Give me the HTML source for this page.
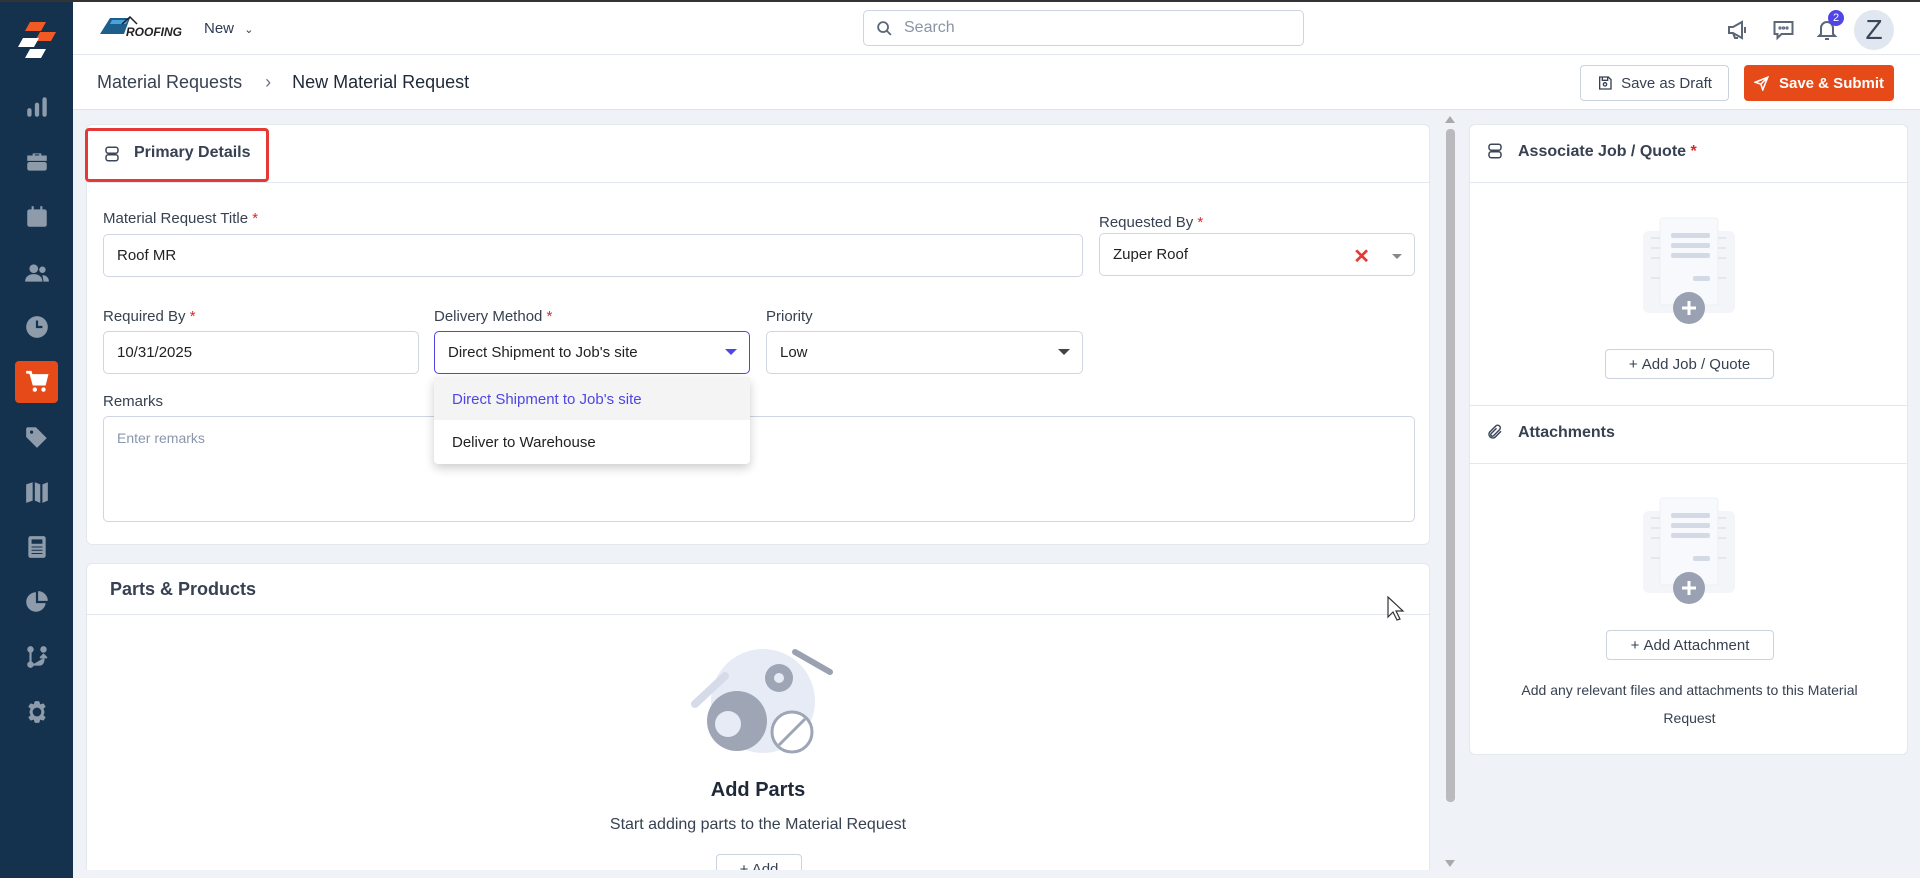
<!DOCTYPE html>
<html style="overflow:hidden;height:878px"><head><meta charset="utf-8"><style>
*{box-sizing:border-box;margin:0;padding:0}
body{width:1920px;height:878px;overflow:hidden;font-family:"Liberation Sans",sans-serif;background:#eff2f7;color:#1f2937;position:relative}
.abs{position:absolute}
.side{left:0;top:0;width:73px;height:878px;background:#14324d;border-top:2px solid #333;z-index:5}
.top{left:73px;top:0;right:0;height:55px;background:#fff;border-bottom:1px solid #e3e7ee;border-top:2px solid #333}
.crumb{left:73px;top:55px;right:0;height:55px;background:#fff;border-bottom:1px solid #dfe4ec}
.card{background:#fff;border:1px solid #e3e7ee;border-radius:6px}
.lbl{font-size:15px;color:#374151}
.req{color:#e02424}
.inp{border:1px solid #cfd6e2;border-radius:5px;background:#fff;font-size:15px;color:#222;padding-left:13px;display:flex;align-items:center}
.btn{border:1px solid #cbd3df;border-radius:4px;background:#fff;font-size:15px;color:#374151;display:flex;align-items:center;justify-content:center;gap:8px}
.ic{position:absolute;left:24px;width:26px;height:26px;fill:#8d9bab}
</style></head><body>
<div class="abs side">
 <svg class="abs" style="left:16px;top:20px" width="42" height="40" viewBox="0 0 42 40"><polygon points="14,0 30,0 25,9 9,9" fill="#f15a22"/><polygon points="24,10 40,10 35,19 19,19" fill="#f15a22"/><polygon points="7,16 23,16 18,25 2,25" fill="#fff"/><polygon points="14,27 30,27 25,36 9,36" fill="#fff"/></svg>
 <svg class="ic" style="top:92px" viewBox="0 0 24 24"><rect x="3" y="13" width="4" height="8" rx="2"/><rect x="10" y="8" width="4" height="13" rx="2"/><rect x="17" y="3" width="4" height="18" rx="2"/></svg>
 <svg class="ic" style="top:147px" viewBox="0 0 24 24"><path d="M8 6V4h8v2h5v5H3V6zM10 5v1h4V5z"/><rect x="3" y="12" width="18" height="8" rx="2"/></svg>
 <svg class="ic" style="top:202px" viewBox="0 0 24 24"><rect x="3" y="5" width="18" height="16" rx="2"/><rect x="7" y="2" width="2" height="5"/><rect x="15" y="2" width="2" height="5"/></svg>
 <svg class="ic" style="top:258px" viewBox="0 0 24 24"><circle cx="9" cy="8" r="4"/><path d="M1 20c0-5 4-7 8-7s8 2 8 7z"/><circle cx="17" cy="9" r="3"/><path d="M18 20h5c0-4-3-6-6-6z"/></svg>
 <svg class="ic" style="top:312px" viewBox="0 0 24 24"><circle cx="12" cy="12" r="10"/><path d="M12 6v6h5" stroke="#14324d" stroke-width="2" fill="none"/></svg>
 <div class="abs" style="left:15px;top:359px;width:43px;height:42px;background:#e64a19;border-radius:4px"></div>
 <svg class="ic" style="top:367px;fill:#fff" viewBox="0 0 24 24"><path d="M2 3h4l3 11h10l2-8H7" stroke="#fff" stroke-width="2.5" fill="#fff"/><circle cx="10" cy="19" r="2"/><circle cx="18" cy="19" r="2"/></svg>
 <svg class="ic" style="top:422px" viewBox="0 0 24 24"><path d="M2 4v8l10 10 9-9L11 3H3zM7 6a1.5 1.5 0 1 1 0 3a1.5 1.5 0 0 1 0-3"/></svg>
 <svg class="ic" style="top:477px" viewBox="0 0 24 24"><path d="M2 5l6-2v17l-6 2zM10 3l5 2v17l-5-2zM17 5l5-2v17l-5 2z"/></svg>
 <svg class="ic" style="top:532px" viewBox="0 0 24 24"><rect x="4" y="2" width="16" height="20" rx="2"/><rect x="7" y="5" width="10" height="4" fill="#14324d"/><path d="M7 12h10M7 15h10M7 18h10" stroke="#14324d"/></svg>
 <svg class="ic" style="top:587px" viewBox="0 0 24 24"><path d="M11 3a9 9 0 1 0 9 10h-9z"/><path d="M13 2v9h9a9 9 0 0 0-9-9"/></svg>
 <svg class="ic" style="top:642px" viewBox="0 0 24 24" fill="none" stroke="#8d9bab" stroke-width="2"><circle cx="6" cy="5" r="2"/><circle cx="6" cy="19" r="2"/><path d="M6 7v10M8 19h6c3 0 4-2 4-6M15 13l3-3 3 3"/><circle cx="18" cy="5" r="2"/></svg>
 <svg class="ic" style="top:697px" viewBox="0 0 24 24"><path d="M10 2h4l1 3 3-1 2 3-2 2 1 3h-0l-1 3 2 2-2 3-3-1-1 3h-4l-1-3-3 1-2-3 2-2-1-3 1-3-2-2 2-3 3 1zM12 8a4 4 0 1 0 0 8a4 4 0 0 0 0-8"/></svg>
</div>
<div class="abs top">
 <svg class="abs" style="left:27px;top:14px" width="90" height="24" viewBox="0 0 90 24"><polygon points="10,2 30,2 24,18 0,18" fill="#1d5f8a"/><polygon points="12,4 28,4 26,8 10,8" fill="#4aa3d8"/><path d="M22 8l8-7 7 7" stroke="#222" fill="none" stroke-width="1.5"/><text x="26" y="20" font-size="12" font-style="italic" font-weight="bold" fill="#222" font-family="Liberation Sans">ROOFING</text></svg>
 <div class="abs" style="left:131px;top:18px;font-size:15px;color:#2d3b55">New <span style="font-size:11px;margin-left:6px">&#8964;</span></div>
 <div class="abs" style="left:790px;top:8px;width:441px;height:36px;border:1px solid #cdd4df;border-radius:5px;font-size:16px;color:#8a94a6;padding-left:40px;line-height:34px">Search
  <svg class="abs" style="left:12px;top:9px" width="17" height="17" viewBox="0 0 24 24" fill="none" stroke="#5b6677" stroke-width="2.5"><circle cx="10" cy="10" r="7"/><path d="M15 15l6 6"/></svg></div>
 <svg class="abs" style="left:1653px;top:16px" width="24" height="24" viewBox="0 0 24 24" fill="none" stroke="#5b6677" stroke-width="2"><path d="M3 9h4l9-5v16l-9-5H3zM7 15l2 5h3"/><path d="M19 9v6"/></svg>
 <svg class="abs" style="left:1698px;top:16px" width="25" height="24" viewBox="0 0 24 24" fill="none" stroke="#5b6677" stroke-width="2"><path d="M3 4h18v12H10l-4 4v-4H3z"/><circle cx="8.5" cy="10" r=".6"/><circle cx="12" cy="10" r=".6"/><circle cx="15.5" cy="10" r=".6"/></svg>
 <svg class="abs" style="left:1742px;top:16px" width="24" height="24" viewBox="0 0 24 24" fill="none" stroke="#5b6677" stroke-width="2"><path d="M6 16V10a6 6 0 0 1 12 0v6l2 2H4zM10 21h4"/></svg>
 <div class="abs" style="left:1755px;top:8px;width:16px;height:16px;border-radius:50%;background:#4f46e5;color:#fff;font-size:11px;text-align:center;line-height:16px">2</div>
 <div class="abs" style="left:1781px;top:8px;width:40px;height:40px;border-radius:50%;background:#e1e7f0;color:#3b4658;font-size:28px;text-align:center;line-height:40px">Z</div>
</div>
<div class="abs crumb">
 <div class="abs" style="left:24px;top:17px;font-size:18px;color:#374151">Material Requests <span style="margin:0 16px 0 18px;color:#6b7280">&#8250;</span> <span style="color:#1f2937">New Material Request</span></div>
 <div class="abs btn" style="left:1507px;top:10px;width:149px;height:36px"><svg width="16" height="16" viewBox="0 0 24 24" fill="none" stroke="#374151" stroke-width="2"><path d="M4 3h13l4 4v14H4zM8 3v5h8V3"/><circle cx="12" cy="14" r="2.5"/></svg>Save as Draft</div>
 <div class="abs" style="left:1671px;top:10px;width:150px;height:36px;background:#e64a19;border-radius:4px;color:#fff;font-size:15px;font-weight:bold;display:flex;align-items:center;justify-content:center;gap:10px"><svg width="15" height="15" viewBox="0 0 24 24" fill="none" stroke="#fff" stroke-width="2.5"><path d="M22 2L2 10l9 3 3 9zM11 13l11-11"/></svg>Save &amp; Submit</div>
</div>
<!-- card 1 -->
<div class="abs card" style="left:86px;top:124px;width:1344px;height:421px">
 <div class="abs" style="left:0;top:57px;width:100%;border-top:1px solid #e3e7ee"></div>
 <div class="abs" style="left:-2px;top:3px;width:184px;height:54px;border:3px solid #e53935;border-radius:4px"></div>
 <svg class="abs" style="left:16px;top:20px" width="18" height="18" viewBox="0 0 24 24" fill="none" stroke="#3b4658" stroke-width="2"><rect x="4" y="3" width="16" height="8" rx="3"/><rect x="4" y="13" width="16" height="8" rx="3"/></svg>
 <div class="abs" style="left:47px;top:19px;font-size:16px;font-weight:bold;color:#374151">Primary Details</div>
 <div class="abs lbl" style="left:16px;top:85px">Material Request Title <span class="req">*</span></div>
 <div class="abs inp" style="left:16px;top:109px;width:980px;height:43px">Roof MR</div>
 <div class="abs lbl" style="left:1012px;top:89px">Requested By <span class="req">*</span></div>
 <div class="abs inp" style="left:1012px;top:108px;width:316px;height:43px">Zuper Roof<span class="abs" style="right:44px;top:10px;color:#e53935;font-size:20px;font-weight:bold">&#10005;</span><span class="abs" style="right:12px;top:20px;border:5px solid transparent;border-top-color:#888"></span></div>
 <div class="abs lbl" style="left:16px;top:183px">Required By <span class="req">*</span></div>
 <div class="abs inp" style="left:16px;top:206px;width:316px;height:43px">10/31/2025</div>
 <div class="abs lbl" style="left:347px;top:183px">Delivery Method <span class="req">*</span></div>
 <div class="abs inp" style="left:347px;top:206px;width:316px;height:43px;border-color:#4f46e5">Direct Shipment to Job's site<span class="abs" style="right:12px;top:17px;border:6px solid transparent;border-top-color:#4f46e5"></span></div>
 <div class="abs lbl" style="left:679px;top:183px">Priority</div>
 <div class="abs inp" style="left:679px;top:206px;width:317px;height:43px">Low<span class="abs" style="right:12px;top:17px;border:6px solid transparent;border-top-color:#444"></span></div>
 <div class="abs lbl" style="left:16px;top:268px">Remarks</div>
 <div class="abs inp" style="left:16px;top:291px;width:1312px;height:106px;align-items:flex-start;padding-top:13px;color:#8a97aa;font-size:14px">Enter remarks</div>
 <div class="abs" style="left:347px;top:252px;width:316px;height:87px;background:#fff;border-radius:4px;box-shadow:0 4px 10px rgba(0,0,0,.2);font-size:15px">
  <div style="height:43px;background:#f4f4f5;color:#4f46e5;padding:14px 0 0 18px">Direct Shipment to Job's site</div>
  <div style="padding:14px 0 0 18px;color:#222">Deliver to Warehouse</div>
 </div>
</div>
<!-- card 2 -->
<div class="abs card" style="left:86px;top:563px;width:1344px;height:307px;overflow:hidden;border-bottom:0;border-radius:6px 6px 0 0">
 <div class="abs" style="left:0;top:50px;width:100%;border-top:1px solid #e3e7ee"></div>
 <div class="abs" style="left:23px;top:15px;font-size:18px;font-weight:bold;color:#374151">Parts &amp; Products</div>
 <svg class="abs" style="left:598px;top:80px" width="150" height="115" viewBox="0 0 150 115">
  <circle cx="78" cy="57" r="52" fill="#e7ebf5"/>
  <path d="M10 60l30-28" stroke="#d5dbe8" stroke-width="8" stroke-linecap="round"/>
  <path d="M110 8l35 20" stroke="#9aa1b0" stroke-width="6" stroke-linecap="round"/>
  <circle cx="52" cy="77" r="30" fill="#9ea5b5"/><circle cx="43" cy="80" r="13" fill="#e7ebf5"/>
  <circle cx="94" cy="34" r="14" fill="#9ea5b5"/><circle cx="94" cy="34" r="5" fill="#e7ebf5"/>
  <circle cx="107" cy="88" r="20" fill="#fff" stroke="#9ea5b5" stroke-width="3"/><path d="M94 101l26-26" stroke="#9ea5b5" stroke-width="3"/>
 </svg>
 <div class="abs" style="left:0;width:100%;text-align:center;top:215px;font-size:20px;font-weight:bold;color:#1f2937">Add Parts</div>
 <div class="abs" style="left:0;width:100%;text-align:center;top:252px;font-size:16px;color:#374151">Start adding parts to the Material Request</div>
 <div class="abs btn" style="left:629px;top:290px;width:86px;height:40px;align-items:flex-start;padding-top:6px">+ Add</div>
</div>
<div class="abs" style="left:73px;top:870px;width:1847px;height:8px;background:#eff2f7"></div>
<!-- scrollbar -->
<div class="abs" style="left:1445px;top:116px;width:0;height:0;border:5px solid transparent;border-bottom:7px solid #aaa;border-top:0"></div>
<div class="abs" style="left:1446px;top:129px;width:9px;height:673px;background:#b9b9be;border-radius:4px"></div>
<div class="abs" style="left:1445px;top:860px;width:0;height:0;border:5px solid transparent;border-top:7px solid #aaa;border-bottom:0"></div>
<!-- right card -->
<div class="abs card" style="left:1469px;top:124px;width:439px;height:631px">
 <div class="abs" style="left:0;top:57px;width:100%;border-top:1px solid #e3e7ee"></div>
 <svg class="abs" style="left:16px;top:17px" width="18" height="18" viewBox="0 0 24 24" fill="none" stroke="#3b4658" stroke-width="2"><rect x="4" y="3" width="16" height="8" rx="3"/><rect x="4" y="13" width="16" height="8" rx="3"/></svg>
 <div class="abs" style="left:48px;top:18px;font-size:16px;font-weight:bold;color:#374151">Associate Job / Quote <span class="req">*</span></div>
 <svg class="abs" style="left:170px;top:88px" width="100" height="115" viewBox="0 0 100 115"><rect x="3" y="18" width="92" height="82" rx="6" fill="#f3f5f9"/><rect x="20" y="5" width="58" height="87" rx="3" fill="#f8f9fc" stroke="#eef0f5"/><rect x="31" y="20" width="39" height="5" rx="2" fill="#d3dae6"/><rect x="31" y="30" width="39" height="5" rx="2" fill="#d3dae6"/><rect x="31" y="40" width="39" height="5" rx="2" fill="#d3dae6"/><rect x="53" y="63" width="17" height="5" rx="2" fill="#d3dae6"/><path d="M11 25h9M11 35h9M11 45h9M11 65h9M78 25h8M78 35h8M78 45h8M78 65h8" stroke="#d3dae6"/><circle cx="49" cy="95" r="16" fill="#9aa1b2"/><path d="M49 88v14M42 95h14" stroke="#fff" stroke-width="3"/></svg>
 <div class="abs btn" style="left:135px;top:224px;width:169px;height:30px">+&nbsp;Add Job / Quote</div>
 <div class="abs" style="left:0;top:280px;width:100%;border-top:1px solid #e3e7ee"></div>
 <svg class="abs" style="left:16px;top:298px" width="18" height="18" viewBox="0 0 24 24" fill="none" stroke="#3b4658" stroke-width="2"><path d="M20 11l-8 8a5 5 0 0 1-7-7l8-8a3.5 3.5 0 0 1 5 5l-8 8a2 2 0 0 1-3-3l7-7"/></svg>
 <div class="abs" style="left:48px;top:299px;font-size:16px;font-weight:bold;color:#374151">Attachments</div>
 <div class="abs" style="left:0;top:338px;width:100%;border-top:1px solid #e3e7ee"></div>
 <svg class="abs" style="left:170px;top:368px" width="100" height="115" viewBox="0 0 100 115"><rect x="3" y="18" width="92" height="82" rx="6" fill="#f3f5f9"/><rect x="20" y="5" width="58" height="87" rx="3" fill="#f8f9fc" stroke="#eef0f5"/><rect x="31" y="20" width="39" height="5" rx="2" fill="#d3dae6"/><rect x="31" y="30" width="39" height="5" rx="2" fill="#d3dae6"/><rect x="31" y="40" width="39" height="5" rx="2" fill="#d3dae6"/><rect x="53" y="63" width="17" height="5" rx="2" fill="#d3dae6"/><path d="M11 25h9M11 35h9M11 45h9M11 65h9M78 25h8M78 35h8M78 45h8M78 65h8" stroke="#d3dae6"/><circle cx="49" cy="95" r="16" fill="#9aa1b2"/><path d="M49 88v14M42 95h14" stroke="#fff" stroke-width="3"/></svg>
 <div class="abs btn" style="left:136px;top:505px;width:168px;height:30px">+&nbsp;Add Attachment</div>
 <div class="abs" style="left:30px;width:379px;text-align:center;top:551px;font-size:14px;line-height:28px;color:#374151">Add any relevant files and attachments to this Material Request</div>
</div>
<svg class="abs" style="left:1387px;top:596px" width="18" height="26" viewBox="0 0 18 26"><path d="M1 1v20l5-5 4 8 3-1-4-8h7z" fill="#fff" stroke="#333" stroke-width="1.2"/></svg>
</body></html>
